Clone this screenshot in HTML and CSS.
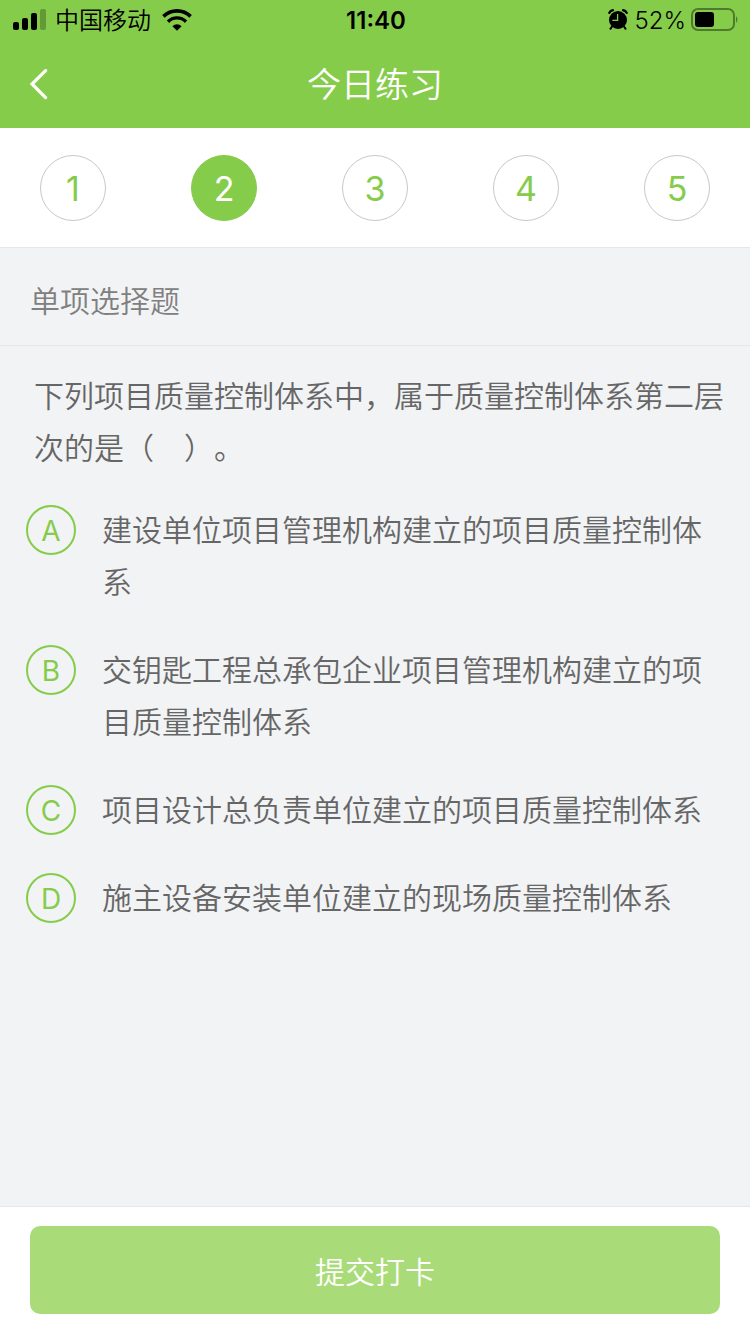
FILE: index.html
```
<!DOCTYPE html>
<html lang="zh-CN">
<head>
    <meta charset="UTF-8">
    <meta name="viewport" content="width=device-width, initial-scale=1">
    <title>今日练习</title>
    <link rel="stylesheet" href="styles.css">
</head>
<body>
    <header class="header">
        <div class="status-bar">
            <div class="status-left">
                <svg width="34" height="24" viewBox="0 0 34 24">
                    <rect x="0" y="13" width="6" height="8" rx="2"/>
                    <rect x="9" y="9" width="6" height="12" rx="2"/>
                    <rect x="18" y="4" width="6" height="17" rx="2"/>
                    <rect x="27" y="0" width="6" height="21" rx="2" opacity="0.25"/>
                </svg>
                <span class="carrier">中国移动</span>
                <svg width="30" height="24" viewBox="0 0 30 24">
                    <path d="M1.4 7.4 A19.4 19.4 0 0 1 28.6 7.4" fill="none" stroke="#000" stroke-width="3.6"/>
                    <path d="M6 12.7 A12.6 12.6 0 0 1 24 12.7" fill="none" stroke="#000" stroke-width="3.4"/>
                    <path d="M10.4 17.2 A6.6 6.6 0 0 1 19.6 17.2 L15 21.8 Z"/>
                </svg>
            </div>
            <div class="time">11:40</div>
            <div class="status-right">
                <svg width="20" height="24" viewBox="0 0 20 24">
                    <circle cx="10" cy="11" r="9"/>
                    <path d="M1.4 3.8 Q2.4 1.6 4.8 1.2 M15.2 1.2 Q17.6 1.6 18.6 3.8" fill="none" stroke="#000" stroke-width="2.4" stroke-linecap="round"/>
                    <path d="M4.4 17 L2.4 19.8 M15.6 17 L17.6 19.8" fill="none" stroke="#000" stroke-width="2" stroke-linecap="round"/>
                    <path d="M9.6 5 V11.4 H4.4" fill="none" stroke="#86cc4b" stroke-width="1.3"/>
                </svg>
                <span class="percent">52%</span>
                <svg width="48" height="26" viewBox="0 0 48 26">
                    <rect x="1" y="1" width="42" height="21" rx="6" fill="none" stroke="#000" stroke-width="2" opacity="0.4"/>
                    <rect x="4" y="4" width="19" height="15" rx="3"/>
                    <path d="M45 8 Q48 11.5 45 15 Z" opacity="0.4"/>
                </svg>
            </div>
        </div>
        <div class="nav">
            <button type="button" class="back" aria-label="返回">
                <svg width="20" height="32" viewBox="0 0 20 32">
                    <path d="M17.6 1.6 L4 15 L17.6 28.6" fill="none" stroke="#fff" stroke-width="3.2" stroke-linecap="round"/>
                </svg>
            </button>
            <h1>今日练习</h1>
        </div>
    </header>

    <nav class="steps">
        <button type="button" class="step">1</button>
        <button type="button" class="step active">2</button>
        <button type="button" class="step">3</button>
        <button type="button" class="step">4</button>
        <button type="button" class="step">5</button>
    </nav>

    <form class="quiz">
        <h2 class="quiz-type">单项选择题</h2>
        <div class="quiz-body">
            <p class="question">下列项目质量控制体系中，属于质量控制体系第二层次的是（　）。</p>
            <div class="options">
                <label class="option">
                    <input type="radio" name="answer" value="A">
                    <span class="letter">A</span>
                    <span class="option-text">建设单位项目管理机构建立的项目质量控制体系</span>
                </label>
                <label class="option">
                    <input type="radio" name="answer" value="B">
                    <span class="letter">B</span>
                    <span class="option-text">交钥匙工程总承包企业项目管理机构建立的项目质量控制体系</span>
                </label>
                <label class="option">
                    <input type="radio" name="answer" value="C">
                    <span class="letter">C</span>
                    <span class="option-text">项目设计总负责单位建立的项目质量控制体系</span>
                </label>
                <label class="option">
                    <input type="radio" name="answer" value="D">
                    <span class="letter">D</span>
                    <span class="option-text">施主设备安装单位建立的现场质量控制体系</span>
                </label>
            </div>
        </div>
        <div class="footer">
            <button type="submit" class="submit">提交打卡</button>
        </div>
    </form>
</body>
</html>
```
FILE: styles.css
```
* { box-sizing: border-box; }
body {
    margin: 0;
    min-height: 100vh;
    display: flex;
    flex-direction: column;
    background: #f2f3f5;
    color: #666;
    font-family: Inter, "Noto Sans CJK SC", sans-serif;
    font-size: 30px;
    font-weight: 350;
    text-spacing-trim: space-all;
}
button { font: inherit; padding: 0; border: 0; cursor: pointer; }
svg { display: block; flex: none; }
h1, h2, p { margin: 0; font-weight: inherit; }

/* header */
.header { background: #86cc4b; }
.status-bar {
    display: grid;
    grid-template-columns: 1fr auto 1fr;
    align-items: center;
    height: 42px;
    padding: 0 11px 0 13px;
    color: #000;
    font-size: 24px;
    line-height: 42px;
}
.status-left, .status-right { display: flex; align-items: center; }
.status-left { gap: 8px; }
.status-right { justify-content: flex-end; gap: 5px; }
.carrier { margin-right: 3px; }
.percent { margin-left: 2px; }
.time { font-weight: 600; }
.nav {
    display: grid;
    grid-template-columns: 1fr auto 1fr;
    align-items: center;
    height: 86px;
    padding: 0 28px;
    color: #fff;
}
.nav h1 { font-size: 34px; line-height: 86px; }
.back { justify-self: start; background: none; }

/* question numbers */
.steps {
    display: flex;
    justify-content: space-between;
    padding: 27px 40px 26px;
    background: #fff;
    border-bottom: 1px solid #e6e7e8;
}
.step {
    width: 66px;
    height: 66px;
    border: 1px solid #c8c8c8;
    border-radius: 50%;
    background: #fff;
    color: #86cc4b;
    font-size: 34px;
    font-weight: 400;
}
.step.active { background: #86cc4b; border-color: #86cc4b; color: #fff; }

/* quiz */
.quiz { flex: 1; display: flex; flex-direction: column; }
.quiz-type {
    padding: 31px 30px 22px;
    border-bottom: 1px solid #e6e7e8;
    color: #808080;
    font-size: 30px;
    line-height: 44px;
}
.quiz-body { flex: 1; padding: 24px 26px; line-height: 52px; }
.question { margin: 0 -8px 30px 8px; }
.options { display: flex; flex-direction: column; gap: 36px; }
.option { position: relative; display: flex; align-items: flex-start; gap: 26px; cursor: pointer; }
.option input { position: absolute; width: 50px; height: 50px; margin: 0; opacity: 0; }
.letter {
    flex: none;
    width: 50px;
    height: 50px;
    margin-top: 1px;
    border: 2px solid #86cc4b;
    border-radius: 50%;
    color: #86cc4b;
    font-size: 28px;
    font-weight: 400;
    line-height: 48px;
    text-align: center;
}
.option input:checked + .letter { background: #86cc4b; color: #fff; }

/* footer */
.footer { padding: 19px 30px 20px; background: #fff; border-top: 1px solid #e6e7e8; }
.submit {
    display: block;
    width: 100%;
    height: 88px;
    border-radius: 10px;
    background: #a9dc79;
    color: #fff;
}
```
